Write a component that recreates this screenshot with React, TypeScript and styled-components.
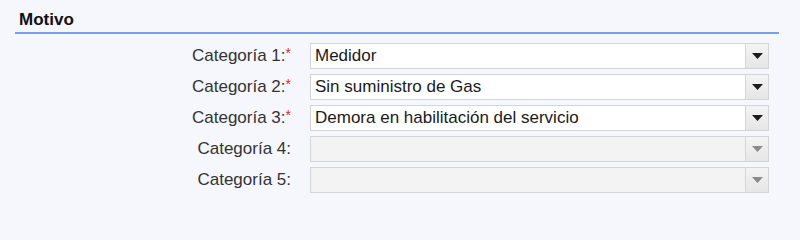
import React from 'react';
import styled, { createGlobalStyle } from 'styled-components';

const GlobalStyle = createGlobalStyle`
  html, body {
    margin: 0;
    padding: 0;
    background: #f6f7fc;
    font-family: "Liberation Sans", Arial, sans-serif;
  }
`;

const Section = styled.section`
  width: 764px;
  margin-left: 15px;
  padding-top: 10px;
`;

const Title = styled.h2`
  margin: 0;
  padding: 0 0 2px 4px;
  font-size: 17px;
  line-height: 20px;
  font-weight: bold;
  color: #111;
  border-bottom: 2px solid #76a0e9;
`;

const Form = styled.div`
  display: grid;
  grid-template-columns: 277px 459px;
  column-gap: 18px;
  row-gap: 5px;
  align-items: center;
  padding-top: 9px;
`;

const Label = styled.label`
  text-align: right;
  font-size: 17px;
  color: #333;
  white-space: nowrap;
  padding-right: 1px;
`;

const Required = styled.span`
  color: #e0262b;
  font-size: 14px;
  vertical-align: top;
  position: relative;
  top: -1px;
`;

const Select = styled.div`
  display: flex;
  height: 26px;
`;

const Field = styled.div<{ $disabled?: boolean }>`
  flex: 1;
  box-sizing: border-box;
  height: 26px;
  border: 1px solid #d4d4d4;
  border-right: none;
  background: ${p => (p.$disabled ? '#f3f3f3' : '#ffffff')};
  padding: 0 4px;
  font-size: 17px;
  line-height: 24px;
  color: #1a1a1a;
  white-space: nowrap;
  overflow: hidden;
`;

const Toggle = styled.div<{ $disabled?: boolean }>`
  box-sizing: border-box;
  width: 24px;
  height: 26px;
  border: 1px solid #d4d4d4;
  background: linear-gradient(#f4f4f4, #e6e6e6);
  display: flex;
  align-items: center;
  justify-content: center;
  color: ${p => (p.$disabled ? '#8a8a8a' : '#1c1c1c')};
`;

const Arrow = ({ color }: { color?: string }) => (
  <svg width="11" height="6" viewBox="0 0 11 6">
    <polygon points="0,0 11,0 5.5,6" fill={color || 'currentColor'} />
  </svg>
);

interface ICategoryRow {
  label: string;
  value: string;
  required: boolean;
}

const ROWS: ICategoryRow[] = [
  { label: 'Categoría 1:', value: 'Medidor', required: true },
  { label: 'Categoría 2:', value: 'Sin suministro de Gas', required: true },
  { label: 'Categoría 3:', value: 'Demora en habilitación del servicio', required: true },
  { label: 'Categoría 4:', value: '', required: false },
  { label: 'Categoría 5:', value: '', required: false },
];

export default function App() {
  return (
    <>
      <GlobalStyle />
      <Section>
        <Title>Motivo</Title>
        <Form>
          {ROWS.map(row => {
            const disabled = !row.required;
            return (
              <React.Fragment key={row.label}>
                <Label>
                  {row.label}
                  {row.required && <Required>*</Required>}
                </Label>
                <Select>
                  <Field $disabled={disabled}>{row.value}</Field>
                  <Toggle $disabled={disabled}>
                    <Arrow />
                  </Toggle>
                </Select>
              </React.Fragment>
            );
          })}
        </Form>
      </Section>
    </>
  );
}
